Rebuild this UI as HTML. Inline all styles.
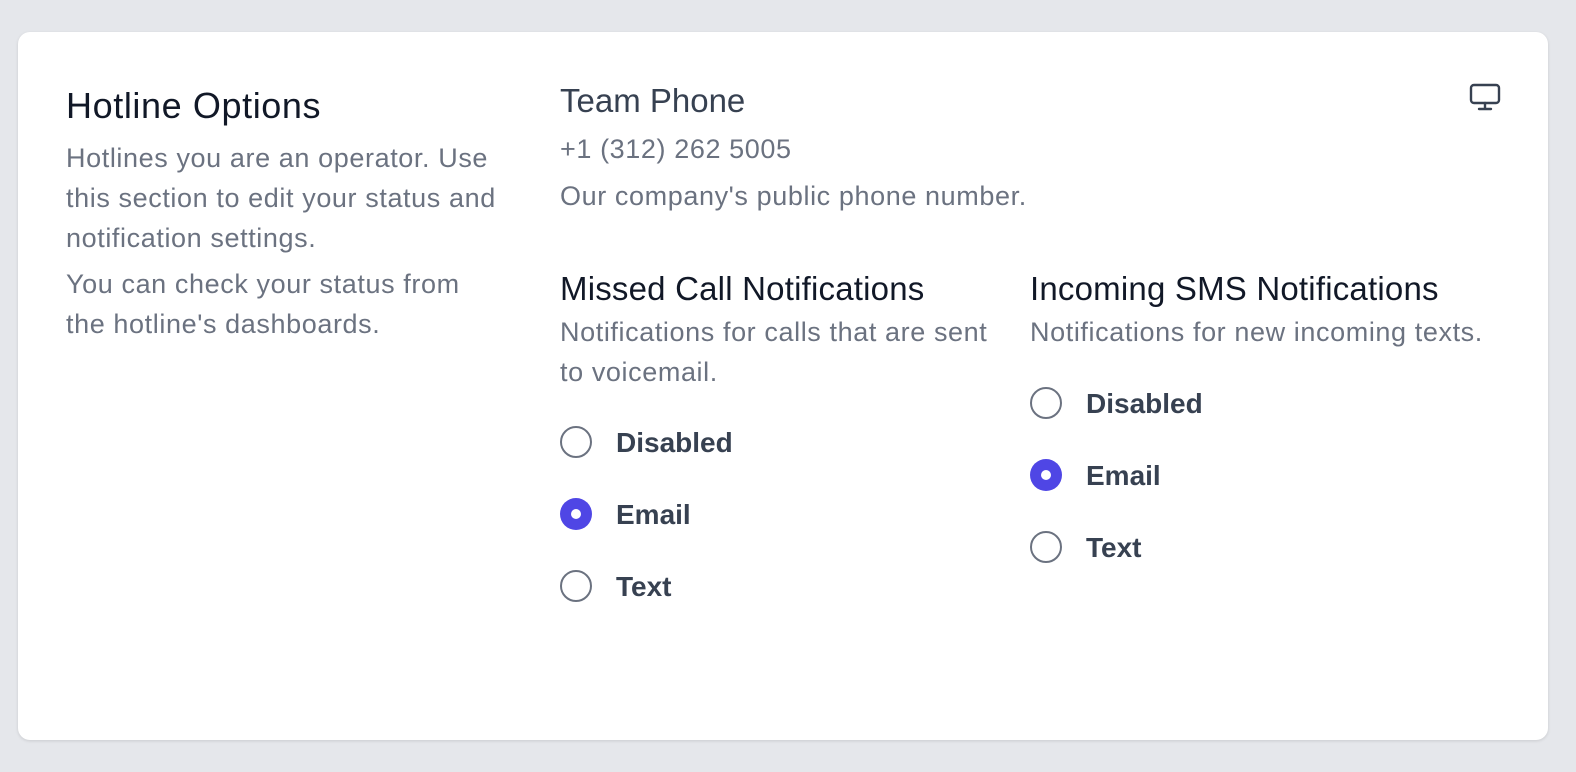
<!DOCTYPE html>
<html><head><style>
body{margin:0;width:1576px;height:772px;background:#e5e7eb;font-family:"Liberation Sans",sans-serif;position:relative;overflow:hidden}
.card{position:absolute;left:18px;top:32px;width:1530px;height:708px;background:#fff;border-radius:12px;box-shadow:0 1px 3px rgba(0,0,0,.12)}
.a{position:absolute;white-space:nowrap}
.h{font-size:36px;line-height:1;color:#111827;letter-spacing:0.6px}
.h2{font-size:33px;line-height:1;color:#111827;letter-spacing:0.2px}
.p{font-size:27px;color:#6b7280;line-height:40px;letter-spacing:0.6px}
.tp{font-size:33px;line-height:1;color:#374151}
.r{position:absolute;width:28px;height:28px;border:2px solid #6b7280;border-radius:50%;box-sizing:content-box}
.r.on{border:none;width:32px;height:32px;background:#4f46e5}
.r.on::after{content:"";position:absolute;left:11px;top:11px;width:10px;height:10px;border-radius:50%;background:#fff}
.l{position:absolute;font-size:28px;line-height:1;color:#374151;font-weight:bold}
</style></head><body>
<div class="card"></div>
<div class="a h" style="left:66px;top:88px">Hotline Options</div>
<div class="a p" style="left:66px;top:138px">Hotlines you are an operator. Use<br>this section to edit your status and<br>notification settings.</div>
<div class="a p" style="left:66px;top:264px">You can check your status from<br>the hotline's dashboards.</div>
<div class="a tp" style="left:560px;top:84px">Team Phone</div>
<div class="a p" style="left:560px;top:129px">+1 (312) 262 5005</div>
<div class="a p" style="left:560px;top:176px">Our company's public phone number.</div>
<svg class="a" style="left:1468px;top:82px" width="34" height="30" viewBox="0 0 34 30" fill="none" stroke="#374151" stroke-width="2.4" stroke-linecap="round"><rect x="3" y="3" width="28" height="18" rx="3"/><path d="M17 21v5M11 27h12"/></svg>
<div class="a h2" style="left:560px;top:272px">Missed Call Notifications</div>
<div class="a p" style="left:560px;top:312px">Notifications for calls that are sent<br>to voicemail.</div>
<div class="r" style="left:560px;top:426px"></div><div class="l" style="left:616px;top:429px">Disabled</div>
<div class="r on" style="left:560px;top:498px"></div><div class="l" style="left:616px;top:501px">Email</div>
<div class="r" style="left:560px;top:570px"></div><div class="l" style="left:616px;top:573px">Text</div>
<div class="a h2" style="left:1030px;top:272px">Incoming SMS Notifications</div>
<div class="a p" style="left:1030px;top:312px">Notifications for new incoming texts.</div>
<div class="r" style="left:1030px;top:387px"></div><div class="l" style="left:1086px;top:390px">Disabled</div>
<div class="r on" style="left:1030px;top:459px"></div><div class="l" style="left:1086px;top:462px">Email</div>
<div class="r" style="left:1030px;top:531px"></div><div class="l" style="left:1086px;top:534px">Text</div>
</body></html>
